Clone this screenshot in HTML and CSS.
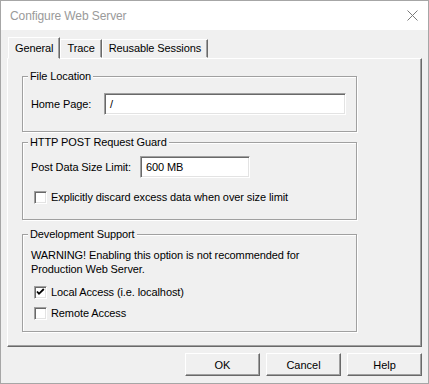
FILE: index.html
```html
<!DOCTYPE html>
<html lang="en">
<head>
  <meta charset="UTF-8" />
  <title>Configure Web Server</title>
  <link rel="stylesheet" href="styles.css">
</head>
<body>

  <div class="window">
    <!-- title bar -->
    <div class="titlebar">
      <span class="title">Configure Web Server</span>
      <svg class="close" width="11" height="11" viewBox="0 0 11 11">
        <path d="M0.5 0.5 L10.5 10.5 M10.5 0.5 L0.5 10.5" stroke="#7a7a7a" stroke-width="1" fill="none" />
      </svg>
    </div>

    <div class="content">
      <div class="tabs">
        <div class="tab active">General</div>
        <div class="tab">Trace</div>
        <div class="tab">Reusable Sessions</div>
      </div>

      <div class="panel">
        <div class="group group-file">
          <span class="group-title">File Location</span>
          <div class="row">
            <label class="label label-home">Home Page:</label>
            <div class="input input-home">/</div>
          </div>
        </div>

        <div class="group group-post">
          <span class="group-title">HTTP POST Request Guard</span>
          <div class="row">
            <label class="label label-post">Post Data Size Limit:</label>
            <div class="input input-post">600 MB</div>
          </div>
          <div class="check-row check-discard">
            <span class="checkbox"></span>
            <span>Explicitly discard excess data when over size limit</span>
          </div>
        </div>

        <div class="group group-dev">
          <span class="group-title">Development Support</span>
          <p class="warning">WARNING! Enabling this option is not recommended for<br>Production Web Server.</p>
          <div class="check-row check-local">
            <span class="checkbox">
              <svg width="11" height="11" viewBox="0 0 11 11">
                <path d="M2 4.5 L4 6.8 L8.8 2" stroke="#000" stroke-width="1.8" fill="none" />
              </svg>
            </span>
            <span>Local Access (i.e. localhost)</span>
          </div>
          <div class="check-row check-remote">
            <span class="checkbox"></span>
            <span>Remote Access</span>
          </div>
        </div>
      </div>

      <div class="buttons">
        <button>OK</button>
        <button>Cancel</button>
        <button>Help</button>
      </div>
    </div>
  </div>

</body>
</html>
```

FILE: styles.css
```css
body {
  margin: 0;
  font-family: "Liberation Sans", Arial, sans-serif;
  font-size: 11px;
  letter-spacing: -0.1px;
  color: #000;
  background: #f0f0f0;
}
.window {
  width: 429px;
  height: 384px;
  box-sizing: border-box;
  border: 1px solid #a6a6a6;
  background: #f0f0f0;
}
.titlebar {
  height: 29px;
  background: #fff;
  display: flex;
  align-items: center;
  justify-content: space-between;
  padding: 0 10px 0 9px;
}
.title {
  font-size: 12px;
  letter-spacing: -0.1px;
  color: #9a9a9a;
}
.close {
  display: block;
}
.content {
  padding: 0 6px;
}
.tabs {
  display: flex;
  align-items: flex-end;
  height: 21px;
  margin-top: 7px;
  padding-left: 1px;
}
.tab {
  height: 17px;
  line-height: 16px;
  padding: 0 6px;
  border: 1px solid;
  border-color: #fff #696969 transparent #fff;
  box-shadow: inset -1px 0 0 #a0a0a0;
}
.tab.active {
  height: 20px;
  line-height: 20px;
  margin-bottom: -1px;
  position: relative;
  z-index: 1;
  background: #f0f0f0;
}
.panel {
  height: 289px;
  box-sizing: border-box;
  border: 1px solid;
  border-color: #fff #696969 #696969 #fff;
  box-shadow: inset -1px -1px 0 #a0a0a0;
  padding: 17px 0 0 14px;
}
.group {
  position: relative;
  width: 335px;
  box-sizing: border-box;
  border: 1px solid #a0a0a0;
  box-shadow: inset 1px 1px 0 #fff, 1px 1px 0 #fff;
}
.group-title {
  position: absolute;
  top: -7px;
  left: 5px;
  padding: 0 2px;
  line-height: 13px;
  background: #f0f0f0;
}
.group-file {
  height: 56px;
  padding: 16px 0 0 8px;
}
.group-post {
  height: 78px;
  margin-top: 10px;
  padding: 13px 0 0 8px;
}
.group-dev {
  height: 98px;
  margin-top: 14px;
  padding: 13px 0 0 8px;
}
.row {
  display: flex;
  align-items: center;
}
.label-home {
  width: 73px;
}
.label-post {
  width: 109px;
}
.input {
  height: 22px;
  box-sizing: border-box;
  line-height: 20px;
  padding-left: 5px;
  background: #fff;
  border: 1px solid;
  border-color: #a0a0a0 #fff #fff #a0a0a0;
  box-shadow: inset 1px 1px 0 #696969, inset -1px -1px 0 #e3e3e3;
}
.input-home {
  width: 242px;
}
.input-post {
  width: 110px;
}
.check-row {
  display: flex;
  align-items: center;
  gap: 4px;
  margin-left: 3px;
  line-height: 13px;
}
.check-discard {
  margin-top: 13px;
}
.check-local {
  margin-top: 10px;
}
.check-remote {
  margin-top: 8px;
}
.checkbox {
  width: 13px;
  height: 13px;
  box-sizing: border-box;
  background: #fff;
  border: 1px solid;
  border-color: #a0a0a0 #fff #fff #a0a0a0;
  box-shadow: inset 1px 1px 0 #696969, inset -1px -1px 0 #e3e3e3;
  display: flex;
  align-items: center;
  justify-content: center;
}
.checkbox svg {
  display: block;
}
.warning {
  margin: 0;
  line-height: 14px;
}
.buttons {
  display: flex;
  justify-content: flex-end;
  gap: 6px;
  margin-top: 6px;
}
button {
  width: 75px;
  height: 23px;
  font-family: "Liberation Sans", Arial, sans-serif;
  font-size: 11px;
  color: #000;
  background: #f0f0f0;
  border: 1px solid;
  border-color: #fff #696969 #696969 #fff;
  box-shadow: inset -1px -1px 0 #a0a0a0;
  padding: 0;
}
```
